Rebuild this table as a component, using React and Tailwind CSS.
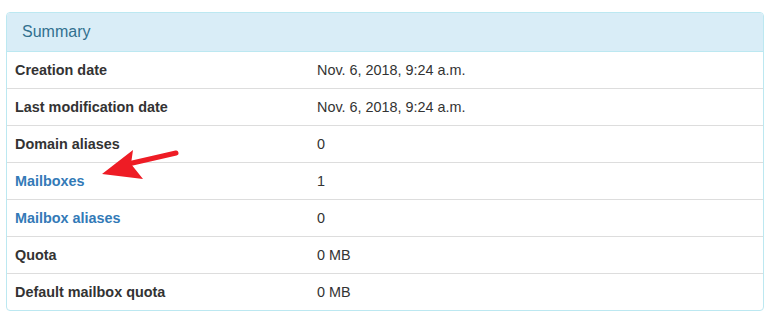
import React from "react";

const rows = [
  { label: "Creation date", value: "Nov. 6, 2018, 9:24 a.m." },
  { label: "Last modification date", value: "Nov. 6, 2018, 9:24 a.m." },
  { label: "Domain aliases", value: "0" },
  { label: "Mailboxes", value: "1", link: true },
  { label: "Mailbox aliases", value: "0", link: true },
  { label: "Quota", value: "0 MB" },
  { label: "Default mailbox quota", value: "0 MB" },
];

export default function App() {
  return (
    <div
      className="relative w-[768px] h-[326px] bg-white pt-[12px] px-[6px] text-[14.4px] text-[#333]"
      style={{ fontFamily: '"Liberation Sans", Arial, sans-serif' }}
    >
      <div className="w-[758px] border border-[#bce8f1] rounded-[4px] bg-white overflow-hidden">
        <div className="h-[39px] bg-[#d9edf7] border-b border-[#bce8f1] px-[15px] flex items-center text-[16px] text-[#31708f]">
          Summary
        </div>
        <div className="flex flex-col">
          {rows.map((row, i) => (
            <div
              key={i}
              className={
                "flex items-center leading-[20px] " +
                (i === 0 ? "h-[36px]" : "h-[37px] border-t border-[#ddd]")
              }
            >
              <div className="w-[302px] px-[8px] font-bold">
                {row.link ? (
                  <a className="text-[#337ab7]">{row.label}</a>
                ) : (
                  row.label
                )}
              </div>
              <div className="px-[8px]">{row.value}</div>
            </div>
          ))}
        </div>
      </div>

      {/* annotation arrow */}
      <svg
        className="absolute left-0 top-0 pointer-events-none"
        width="768"
        height="326"
      >
        <line
          x1="176"
          y1="153"
          x2="128"
          y2="164"
          stroke="#ee1c25"
          strokeWidth="5"
          strokeLinecap="round"
        />
        <polygon points="102,174 133,150 131,164 143,179" fill="#ee1c25" />
      </svg>
    </div>
  );
}
